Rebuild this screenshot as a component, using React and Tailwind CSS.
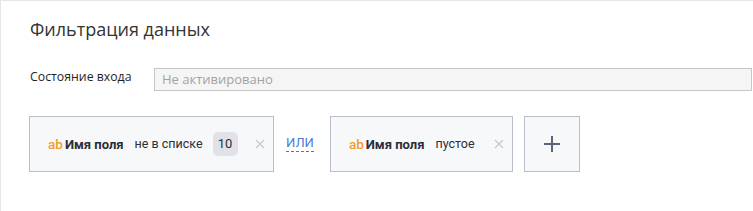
import React from "react";

function Close() {
  return (
    <svg width="10" height="10" viewBox="0 0 10 10" className="shrink-0">
      <path d="M1 1L9 9M9 1L1 9" stroke="#c3c7cf" strokeWidth="1.1" />
    </svg>
  );
}

function FieldName() {
  return (
    <span className="flex items-baseline">
      <span className="text-[#f39a2b] font-medium text-[13.5px] mr-[2px]">ab</span>
      <span className="text-[#2b2e36] font-bold text-[13px]">Имя поля</span>
    </span>
  );
}

export default function App() {
  return (
    <div className="w-full h-[211px] bg-white border-t border-l border-[#e6e6e6] pl-[28px] pt-[16px]" style={{ fontFamily: '"Open Sans", sans-serif' }}>
      <div className="text-[18px] leading-[24px] text-[#333] pl-[1px]">Фильтрация данных</div>
      <div className="flex items-center mt-[27px]">
        <div className="w-[125px] text-[12.3px] text-[#1f1f1f] -mt-[4px] pl-[1px]">Состояние входа</div>
        <div className="flex-1 h-[23px] bg-[#f5f5f5] border border-[#c6c6c6] flex items-center pl-[7px] text-[13px] text-[#a3a3a3] mr-[1px]">
          Не активировано
        </div>
      </div>
      <div className="flex items-center mt-[25px] text-[12.5px] text-[#2b2e36]" style={{ fontFamily: 'Roboto, sans-serif' }}>
        <div className="h-[56px] w-[245px] border border-[#b9bdcc] bg-[#f7f8fa] flex items-center pl-[18px]">
          <FieldName />
          <span className="ml-[11px]">не в списке</span>
          <span className="ml-[10px] w-[25px] h-[24px] rounded-[5px] bg-[#e0e2e7] flex items-center justify-center text-[13px]">10</span>
          <span className="ml-[17px]"><Close /></span>
        </div>
        <div className="ml-[12px] mr-[16px] text-[13px] text-[#4a7dd1] border-b border-dashed border-[#2f7fd8] leading-[14px] pb-[1px]">ИЛИ</div>
        <div className="h-[56px] w-[183px] border border-[#b9bdcc] bg-[#f7f8fa] flex items-center pl-[18px]">
          <FieldName />
          <span className="ml-[11px]">пустое</span>
          <span className="ml-[19px]"><Close /></span>
        </div>
        <div className="ml-[11px] h-[56px] w-[56px] border border-[#b9bdcc] bg-[#f7f8fa] flex items-center justify-center">
          <svg width="16" height="16" viewBox="0 0 16 16">
            <path d="M8 0V16M0 8H16" stroke="#5b6478" strokeWidth="2" />
          </svg>
        </div>
      </div>
    </div>
  );
}
